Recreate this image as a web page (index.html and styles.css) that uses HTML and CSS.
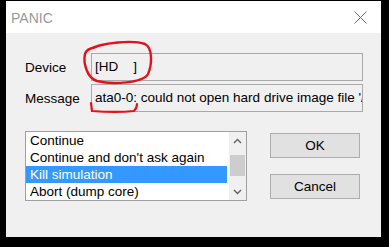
FILE: index.html
```html
<!DOCTYPE html>
<html lang="en">
<head>
    <meta charset="UTF-8">
    <title>PANIC</title>
    <link rel="stylesheet" href="styles.css">
</head>
<body>
    <div class="window">
        <div class="titlebar">
            <span class="title">PANIC</span>
            <svg class="close" width="13" height="13" viewBox="0 0 13 13">
                <path d="M0.5 0.5 L12.5 12.5 M12.5 0.5 L0.5 12.5" stroke="#6f6f6f" stroke-width="1" fill="none"/>
            </svg>
        </div>
        <div class="content">
            <div class="field-row">
                <div class="label">Device</div>
                <div class="field">[HD    ]</div>
            </div>
            <div class="field-row">
                <div class="label">Message</div>
                <div class="field">ata0-0: could not open hard drive image file '/</div>
            </div>
            <div class="bottom">
                <div class="listbox">
                    <div class="items">
                        <div class="item">Continue</div>
                        <div class="item">Continue and don't ask again</div>
                        <div class="item selected">Kill simulation</div>
                        <div class="item">Abort (dump core)</div>
                    </div>
                    <div class="scrollbar">
                        <div class="arrow">
                            <svg width="9" height="6" viewBox="0 0 9 6"><path d="M1 5 L4.5 1.5 L8 5" stroke="#606060" stroke-width="1.4" fill="none"/></svg>
                        </div>
                        <div class="track"><div class="thumb"></div></div>
                        <div class="arrow">
                            <svg width="9" height="6" viewBox="0 0 9 6"><path d="M1 1 L4.5 4.5 L8 1" stroke="#606060" stroke-width="1.4" fill="none"/></svg>
                        </div>
                    </div>
                </div>
                <div class="buttons">
                    <button class="btn">OK</button>
                    <button class="btn">Cancel</button>
                </div>
            </div>
        </div>
        <!-- red marker scribbles drawn over the dialog -->
        <svg class="marks" width="375" height="236" viewBox="0 0 375 236">
            <path d="M82 49 C 96 41, 128 39, 139 43 C 147 47, 146 64, 142 73 C 137 82, 106 84, 91 80 C 81 77, 77 62, 79 53 C 80 49, 84 47, 90 46"
                  stroke="#e3121a" stroke-width="2.4" fill="none" stroke-linecap="round"/>
            <path d="M85 102 L86 110 C 100 111, 118 111, 128 110 C 130 108, 131 106, 131 103"
                  stroke="#e3121a" stroke-width="2.2" fill="none" stroke-linecap="round"/>
        </svg>
    </div>
</body>
</html>
```

FILE: styles.css
```css
body {
    margin: 0;
    background-color: black;
    font-family: "Liberation Sans", Arial, sans-serif;
    font-size: 13.5px;
    color: #000;
}
.window {
    position: relative;
    margin: 1px 0 0 6px;
    width: 375px;
    height: 236px;
    background-color: #f0f0f0;
}
.titlebar {
    height: 32px;
    background-color: #fff;
    display: flex;
    align-items: center;
    justify-content: space-between;
    padding: 0 14px 0 5px;
}
.title {
    color: #999;
    font-size: 14px;
    padding-top: 2px;
}
.close {
    display: block;
}
.content {
    padding: 20px 0 0 19px;
}
.field-row {
    display: flex;
    align-items: center;
    margin-bottom: 3px;
}
.label {
    width: 66px;
}
.field {
    width: 272px;
    height: 28px;
    box-sizing: border-box;
    border: 1px solid #a9a9a9;
    padding: 0 0 0 3px;
    line-height: 26px;
    white-space: pre;
    overflow: hidden;
}
.bottom {
    display: flex;
    margin-top: 19px;
}
.listbox {
    width: 222px;
    height: 70px;
    box-sizing: border-box;
    border: 1px solid #a0a0a0;
    background-color: #fff;
    display: flex;
}
.items {
    flex: 1;
}
.item {
    height: 17px;
    line-height: 17px;
    padding-left: 4px;
    white-space: nowrap;
}
.item.selected {
    background-color: #3399ff;
    color: #fff;
}
.scrollbar {
    width: 17px;
    background-color: #f0f0f0;
    display: flex;
    flex-direction: column;
    margin-left: 2px;
}
.arrow {
    height: 17px;
    display: flex;
    align-items: center;
    justify-content: center;
}
.track {
    flex: 1;
    padding-top: 6px;
}
.thumb {
    height: 21px;
    margin: 0 1px;
    background-color: #cdcdcd;
}
.buttons {
    display: flex;
    flex-direction: column;
    gap: 16px;
    margin: 2px 0 0 23px;
}
.btn {
    width: 90px;
    height: 25px;
    font-family: "Liberation Sans", Arial, sans-serif;
    font-size: 13.5px;
    background-color: #e1e1e1;
    border: 1px solid #adadad;
    padding: 0;
    color: #000;
}
.marks {
    position: absolute;
    left: 0;
    top: 0;
    pointer-events: none;
}
```
